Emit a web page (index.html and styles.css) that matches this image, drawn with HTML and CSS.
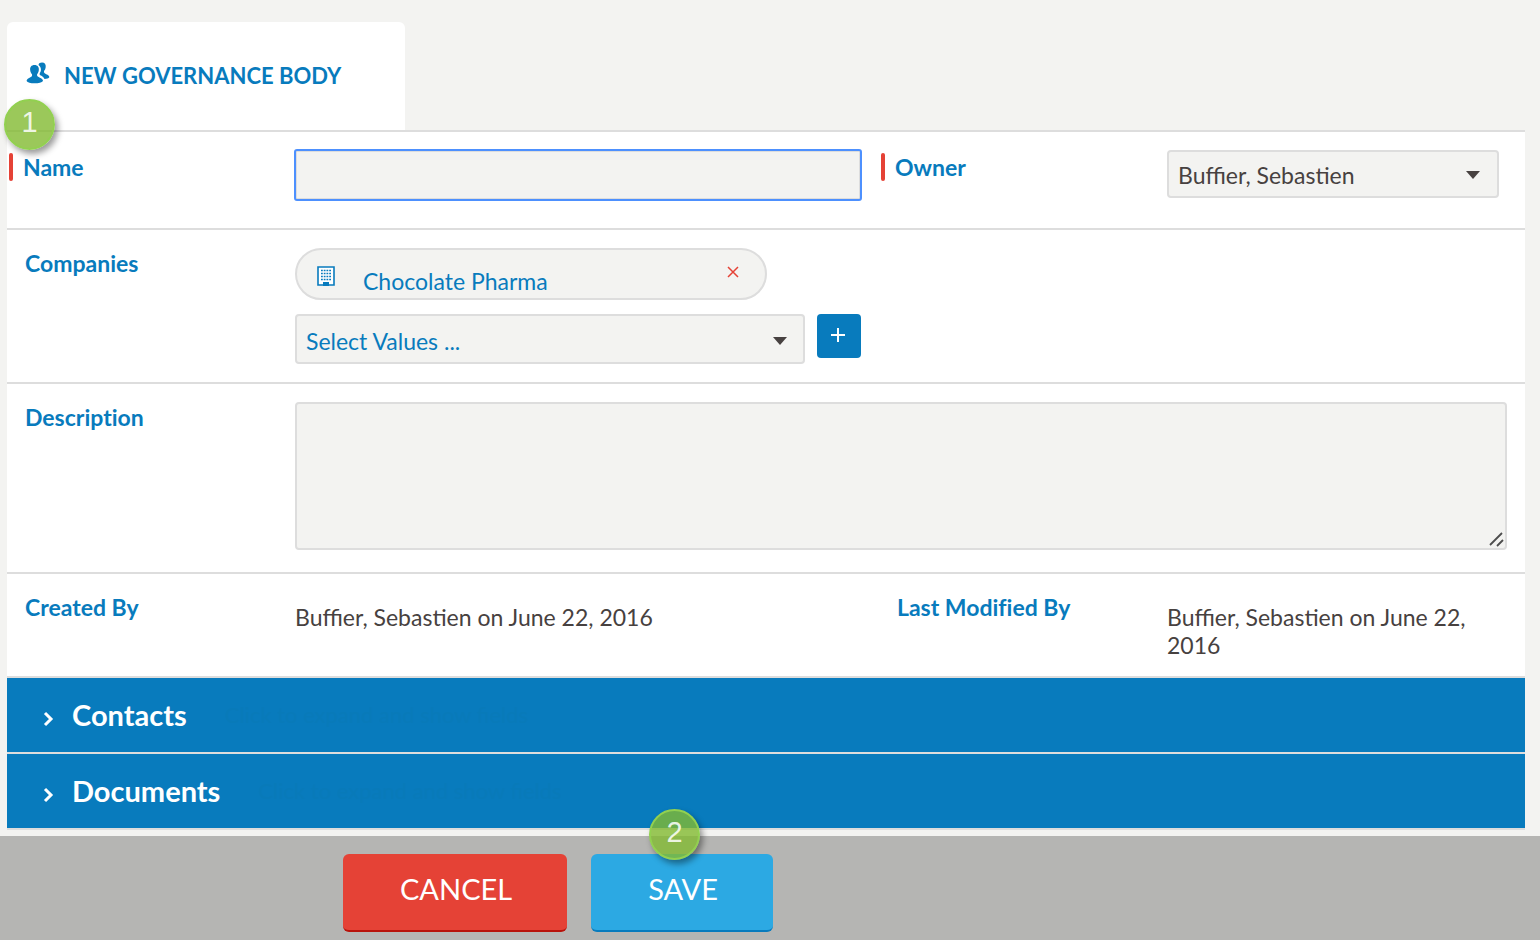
FILE: index.html
```html
<!DOCTYPE html>
<html lang="en">
<head>
<meta charset="utf-8">
<title>New Governance Body</title>
<link rel="stylesheet" href="styles.css">
</head>
<body>
<form class="page">
	<div class="panel">
		<div class="tab">
			<svg class="tab-icon" width="24" height="22" viewBox="0 0 24 22" fill="#087bbd">
				<path d="M12.500 3C12.800 1 14.200 0.400 16 0.400C18.800 0.400 20 2.200 19.700 5C19.500 7 18.800 8 18 9C17.800 10.800 18.500 11.400 20.200 12.200C22.200 13 23.300 13.800 23.300 15.300C22.800 16.500 20.800 17 18.500 17C17.700 15 16.300 14 13.800 12.900C13.500 12.300 13.600 11.500 14 10.800C15.300 9 15.700 5.500 12.500 3Z"/>
				<path d="M8.500 3C11.700 3 13.200 5.200 12.800 8.200C12.600 10 11.900 11.200 11.100 12.200C10.900 14 11.500 14.600 13.500 15.400C15.700 16.200 17 17.200 17 19C16 20.600 12.500 21.300 8.500 21.300C4.500 21.300 1.500 20.600 0.600 19C0.600 17.200 2 16.200 4 15.400C6 14.600 6.300 14 6 12.200C5.100 11.200 4.400 10 4.200 8.200C3.800 5.200 5.300 3 8.500 3Z"/>
			</svg>
			<h1>NEW GOVERNANCE BODY</h1>
		</div>
		<div class="row row-name">
			<span class="badge badge-1">1</span>
			<label class="label required" for="name">Name</label>
			<div class="control"><input type="text" id="name" class="field focused"></div>
			<label class="label required" for="owner">Owner</label>
			<div class="control side">
				<div class="select owner">
					<select id="owner"><option>Buffier, Sebastien</option></select>
				</div>
			</div>
		</div>
		<div class="row">
			<label class="label" for="companies">Companies</label>
			<div class="control">
				<div class="chip">
					<svg width="18" height="20" viewBox="0 0 18 20">
						<path d="M1 1H17V19H1Z" fill="#fff" stroke="#087bbd" stroke-width="1.600"/>
						<path d="M4 4.500H14M4 7.500H14M4 10.500H14M4 13.500H14" stroke="#087bbd" stroke-width="1.500" stroke-dasharray="1.800 .933"/>
						<path d="M6 16H12V20H6Z" fill="#087bbd"/>
					</svg>
					<a href="#">Chocolate Pharma</a>
					<button type="button" class="remove" aria-label="Remove">
						<svg width="12" height="12" viewBox="0 0 12 12"><path d="M1 1L11 11M11 1L1 11" stroke="#e54236" stroke-width="1.500"/></svg>
					</button>
				</div>
				<div class="picker">
					<div class="select values">
						<select id="companies"><option>Select Values ...</option></select>
					</div>
					<button type="button" class="add" aria-label="Add">
						<svg width="14" height="14" viewBox="0 0 14 14"><path d="M7 0V14M0 7H14" stroke="#fff" stroke-width="2"/></svg>
					</button>
				</div>
			</div>
		</div>
		<div class="row">
			<label class="label" for="description">Description</label>
			<div class="control wide">
				<textarea id="description" class="field"></textarea>
				<svg class="grip" width="16" height="16" viewBox="0 0 16 16"><path d="M2 14L14 2M9 15L15 9" stroke="#4d4d4d" stroke-width="1.800"/></svg>
			</div>
		</div>
		<div class="row row-info">
			<span class="label">Created By</span>
			<p class="value">Buffier, Sebastien on June 22, 2016</p>
			<span class="label">Last Modified By</span>
			<p class="value side">Buffier, Sebastien on June 22, 2016</p>
		</div>
		<div class="section">
			<svg width="12" height="16" viewBox="0 0 12 16"><path d="M3 2L9 8L3 14" fill="none" stroke="#fff" stroke-width="3"/></svg>
			<h2>Contacts</h2>
			<span class="hint">Click to expand and show fields</span>
		</div>
		<div class="section">
			<svg width="12" height="16" viewBox="0 0 12 16"><path d="M3 2L9 8L3 14" fill="none" stroke="#fff" stroke-width="3"/></svg>
			<h2>Documents</h2>
			<span class="hint">Click to expand and show fields</span>
		</div>
	</div>
	<div class="footer">
		<button type="button" class="btn cancel">CANCEL</button>
		<div class="save-wrap">
			<button type="submit" class="btn save">SAVE</button>
			<span class="badge badge-2">2</span>
		</div>
	</div>
</form>
</body>
</html>
```
FILE: styles.css
```css
*{box-sizing:border-box;}
body{margin:0;background:#f3f3f1;font-family:Lato,sans-serif;font-size:23px;line-height:28px;color:#474140;}
h1,h2,p{margin:0;}
input,select,textarea,button{font:inherit;color:inherit;}
button{border:0;padding:0;cursor:pointer;}
svg{display:block;flex:none;}

.panel{padding:22px 15px 0 7px;}
.tab{display:flex;align-items:center;gap:14px;width:398px;height:108px;padding:0 19px;background:#fff;border-radius:6px 6px 0 0;color:#087bbd;}
.tab-icon{margin-bottom:6px;}
.tab h1{font-size:22px;line-height:28px;}

/* form rows */
.row{position:relative;display:grid;grid-template-columns:288px 584fr 288px 358fr;background:#fff;border-top:2px solid #ddd;}
.label{padding:19px 0 0 18px;font-weight:bold;font-variant-ligatures:none;color:#087bbd;}
.row-name .label{padding:21px 0 0 2px;}
.required:before{content:"";float:left;width:4px;height:28px;margin-right:10px;border-radius:2px;background:#e54236;}
.control{padding:18px 18px 18px 0;}
.row-name .control{padding-bottom:28px;}
.control.side{padding-right:26px;}
.field{display:block;width:100%;background:#f3f3f1;border:2px solid #ddd;border-radius:4px;}
input.field{height:50px;padding:0 10px;}
.focused,.focused:focus{border-radius:2px;outline:2px solid #4d90fe;outline-offset:-1px;}
textarea.field{height:148px;padding:10px;resize:none;}
.wide{position:relative;grid-column:2 / 5;padding-bottom:22px;}
.grip{position:absolute;right:21px;bottom:25px;}

.select{position:relative;}
.select select{display:block;width:100%;height:48px;padding:2px 40px 0 9px;appearance:none;background:#f3f3f1;border:2px solid #ddd;border-radius:4px;}
.select:after{content:"";position:absolute;right:19px;top:21px;border:7px solid transparent;border-top:8px solid #474140;border-bottom:0;pointer-events:none;}
.picker{display:flex;gap:12px;margin-top:14px;}
.values{flex:1;}
.select.values select{height:50px;padding-top:4px;color:#087bbd;}
.values:after{top:23px;right:18px;}
.add{display:flex;justify-content:center;width:44px;height:44px;padding:14px 2px 0 0;background:#087bbd;border-radius:4px;}

.chip{display:flex;width:calc(100% - 94px);height:52px;padding:16px 26px 0 20px;background:#f3f3f1;border:2px solid #ddd;border-radius:26px;}
.chip a{flex:1;margin-left:28px;line-height:30px;color:#087bbd;text-decoration:none;}
.remove{height:12px;background:none;}

.value{padding:29px 0 17px;}
.value.side{padding-right:26px;}

.section{display:flex;align-items:center;height:76px;padding:0 35px;border-top:2px solid #ddd;background:#087bbd;color:#fff;}
.section svg{margin-top:8px;}
.section h2{margin-left:18px;font-size:29px;line-height:36px;}
.section:last-child{height:78px;border-bottom:2px solid #ddd;}
.hint{margin-left:38px;font-size:22px;color:#087ab9;}

.footer{display:flex;gap:24px;margin-top:6px;padding:18px 0 8px 343px;background:#b5b5b3;}
.btn{display:block;height:78px;padding:0 55px 6px 57px;border-radius:6px;font-size:29px;line-height:36px;color:#fff;}
.cancel{background:#e54236;border-bottom:2px solid #b8120a;}
.save{background:#2ca9e3;border-bottom:2px solid #087bbd;}
.save-wrap{position:relative;}

/* step numbers */
.badge{position:absolute;z-index:1;width:51px;height:51px;border:2px solid #92d050;border-radius:50%;background:rgba(130,186,49,.8);box-shadow:3px 4px 6px rgba(0,0,0,.4);font-family:"Liberation Sans",sans-serif;font-size:29px;line-height:42px;text-align:center;color:rgba(255,255,255,.85);}
.badge-1{left:-3px;top:-33px;}
.badge-2{left:58px;top:-45px;}
```
